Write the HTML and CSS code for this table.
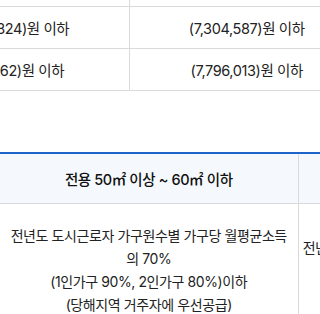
FILE: index.html
```html
<!DOCTYPE html>
<html lang="ko">
<head>
<meta charset="utf-8">
<link rel="stylesheet" href="styles.css">
</head>
<body>
<div class="view">
  <div class="scroll-top">
    <table class="tbl-top">
      <colgroup><col class="c1"><col class="c2"></colgroup>
      <tr class="r-cut"><td></td><td></td></tr>
      <tr><td>(16,845,824)원 이하</td><td>(7,304,587)원 이하</td></tr>
      <tr><td>(7,287,362)원 이하</td><td>(7,796,013)원 이하</td></tr>
    </table>
  </div>
  <table class="tbl-main">
    <colgroup><col class="m1"><col class="m2"></colgroup>
    <thead>
      <tr><th>전용 50㎡ 이상 ~ 60㎡ 이하</th><th>전용 60㎡ 초과 ~ 85㎡ 이하</th></tr>
    </thead>
    <tbody>
      <tr>
        <td>전년도 도시근로자 가구원수별 가구당 월평균소득<br>의 70%<br>(1인가구 90%, 2인가구 80%)이하<br>(당해지역 거주자에 우선공급)</td>
        <td class="nowrap">전년도 도시근로자 가구원수별 가구당 월평균소득의<br>100%(1인가구 110%, 2인가구<br>100%)이하</td>
      </tr>
    </tbody>
  </table>
</div>
</body>
</html>
```

FILE: styles.css
```css
* { box-sizing: border-box; }
body {
  margin: 0;
  background: #fff;
  font-family: Inter, "Noto Sans CJK KR", sans-serif;
  color: #222;
  font-size: 14px;
  letter-spacing: -0.4px;
}
.view {
  width: 320px;
  height: 314px;
  overflow: hidden;
}
.scroll-top {
  margin-left: -114px;
}
.tbl-top {
  border-collapse: collapse;
  table-layout: fixed;
  width: 478px;
}
.tbl-top .c1 { width: 243px; }
.tbl-top .c2 { width: 235px; }
.tbl-top td {
  border-bottom: 1px solid #dadada;
  text-align: center;
  height: 42px;
  padding: 0;
  font-size: 14.5px;
}
.tbl-top td:first-child { border-right: 1px solid #dadada; }
.tbl-top .r-cut td { height: 6px; }

.tbl-main {
  margin-top: 61px;
  border-collapse: collapse;
  table-layout: fixed;
  width: 596px;
  border-top: 2px solid #1d63c9;
}
.tbl-main .m1 { width: 298px; }
.tbl-main .m2 { width: 298px; }
.tbl-main th {
  height: 51px;
  background: #f5f9fd;
  color: #111;
  font-weight: 500;
  font-size: 14.5px;
  border-bottom: 1px solid #dadada;
  border-right: 1px solid #dadada;
  padding: 0;
}
.tbl-main td {
  padding: 20px 4px;
  line-height: 23px;
  text-align: center;
  vertical-align: middle;
  border-right: 1px solid #dadada;
}
.tbl-main td.nowrap { white-space: nowrap; }
```
